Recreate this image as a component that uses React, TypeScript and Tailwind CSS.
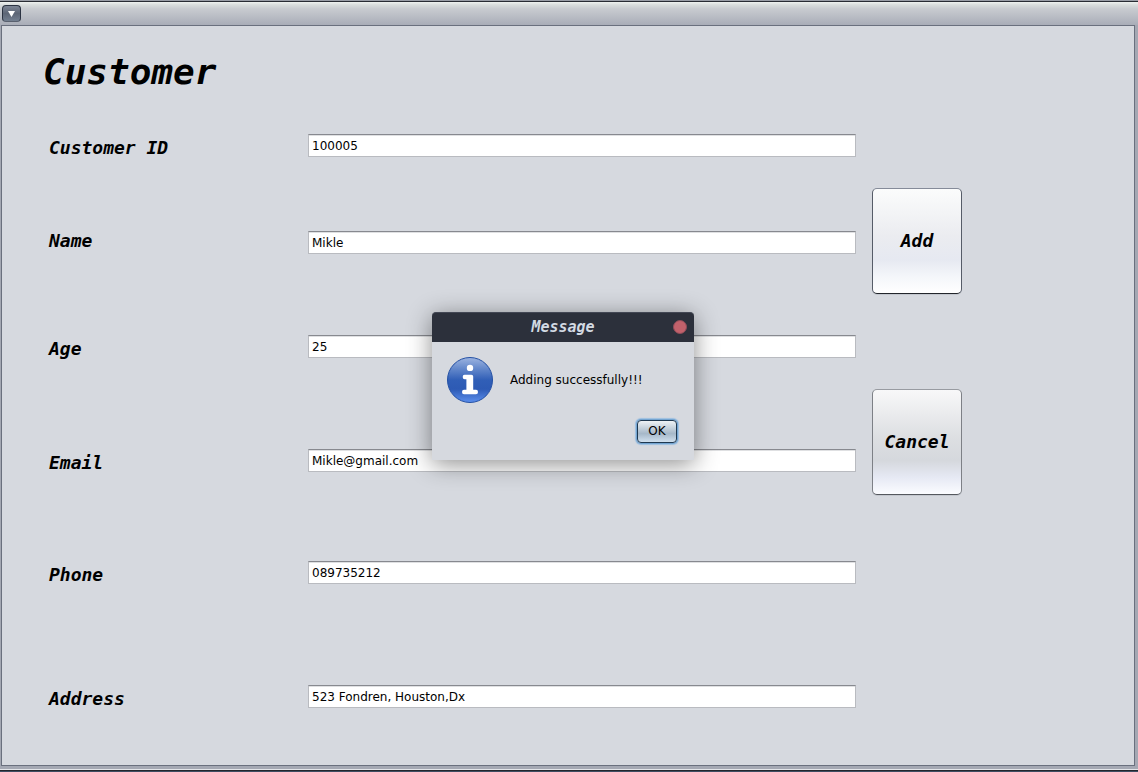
import React from "react";

type Field = { id: string; label: string; value: string; row: string };

const fields: Field[] = [
  { id: "customer-id", label: "Customer ID", value: "100005", row: "h-7 items-start leading-7" },
  { id: "name", label: "Name", value: "Mikle", row: "mt-[66px] h-[26px] items-end leading-[26px]" },
  { id: "age", label: "Age", value: "25", row: "mt-[81px] h-7 items-start leading-7" },
  { id: "email", label: "Email", value: "Mikle@gmail.com", row: "mt-[86px] h-7 items-start leading-7" },
  { id: "phone", label: "Phone", value: "089735212", row: "mt-[84px] h-7 items-start leading-7" },
  { id: "address", label: "Address", value: "523 Fondren, Houston,Dx", row: "mt-[96px] h-7 items-start leading-7" },
];

function TitleBar() {
  return (
    <header className="flex h-[23px] shrink-0 items-start bg-[linear-gradient(to_bottom,#eff2f0_0%,#d9dddd_12%,#c8cbd0_30%,#a9adb8_100%)] px-[2px] pt-[3px]">
      <button
        type="button"
        aria-label="Window menu"
        className="flex h-[17px] w-[19px] items-center justify-center rounded-[4px] border border-[#2b3342] border-b-[#59616f] bg-linear-to-b from-[#7d8595] via-[#5d6676] to-[#737f90]"
      >
        <svg width="7" height="6" viewBox="0 0 7 6" aria-hidden="true">
          <path d="M0 0H7L3.5 6Z" fill="#fff" />
        </svg>
      </button>
    </header>
  );
}

function FieldRow({ field }: { field: Field }) {
  return (
    <div className={`flex ${field.row}`}>
      <label
        htmlFor={field.id}
        className="w-[259px] shrink-0 font-['DejaVu_Sans_Mono',monospace] text-[18px] font-bold italic"
      >
        {field.label}
      </label>
      <input
        id={field.id}
        type="text"
        defaultValue={field.value}
        className="h-[23px] min-w-0 flex-1 border border-[#b9bbc0] border-t-[#87898f] bg-white px-[3px] font-['DejaVu_Sans',sans-serif] text-[12px] leading-5 shadow-[inset_0_1px_0_#dfe0e2] outline-none"
      />
    </div>
  );
}

function InfoIcon() {
  return (
    <svg width="46" height="46" viewBox="0 0 46 46" className="shrink-0" aria-hidden="true">
      <defs>
        <linearGradient id="info-fill" x1="0" y1="0" x2="0" y2="1">
          <stop offset="0" stopColor="#9db4e0" />
          <stop offset="0.25" stopColor="#6388cb" />
          <stop offset="0.5" stopColor="#315fb7" />
          <stop offset="0.7" stopColor="#2d5ab4" />
          <stop offset="1" stopColor="#5c8fee" />
        </linearGradient>
      </defs>
      <circle cx="23" cy="23" r="22.5" fill="url(#info-fill)" stroke="#2450a4" />
      <circle cx="23" cy="10.9" r="3.2" fill="#fff" />
      <path
        d="M17.5 17.7H24.4Q26.2 17.7 26.2 19.5V32.8H29Q31 32.8 31 35Q31 37.2 29 37.2H17Q15 37.2 15 35Q15 32.8 17 32.8H19.4V22.2H17.7Q15.7 22.2 15.7 20Q15.7 17.7 17.5 17.7Z"
        fill="#fff"
      />
    </svg>
  );
}

function MessageDialog() {
  return (
    <div className="absolute inset-0 flex items-center justify-center pr-3 pb-[2px]">
      <section
        role="dialog"
        aria-labelledby="message-title"
        className="w-[262px] rounded-t-[4px] bg-[#d6d9df] shadow-[0_4px_24px_rgba(0,0,0,0.45)]"
      >
        <header className="grid h-[30px] grid-cols-[21px_1fr_21px] items-center rounded-t-[4px] border-t border-[#434754] bg-[#2c303b]">
          <h2
            id="message-title"
            className="col-start-2 text-center font-['DejaVu_Sans_Mono',monospace] text-[15px] leading-5 font-bold text-[#d3dae3] italic"
          >
            Message
          </h2>
          <button
            type="button"
            aria-label="Close"
            className="size-[14px] rounded-full border border-[#8f4c59] bg-[#c2616b]"
          />
        </header>
        <div className="flex items-center gap-[17px] px-[15px] pt-[15px] font-['DejaVu_Sans',sans-serif] text-[12px] leading-5">
          <InfoIcon />
          <p className="whitespace-nowrap">Adding successfully!!!</p>
        </div>
        <div className="flex justify-end px-[17px] pt-[17px] pb-[17px]">
          <button
            type="button"
            className="h-[23px] w-10 rounded-[4px] border border-[#1f3850] bg-linear-to-b from-[#eef2f5] via-[#a6b8c9] via-60% to-[#d0e0ee] font-['DejaVu_Sans',sans-serif] text-[12px] leading-5 shadow-[0_0_0_1px_#73a4d1,0_0_1px_2px_#9dbfe0]"
          >
            OK
          </button>
        </div>
      </section>
    </div>
  );
}

export default function App() {
  return (
    <div className="relative flex min-h-screen flex-col border-t border-[#999da6] bg-[#a4a8b3] text-black">
      <div className="h-px bg-[#292c34]" />
      <TitleBar />
      <main className="ml-px mr-[3px] flex-1 border border-[#6a707e] bg-[#d6d9df] pl-[47px] pr-[172px]">
        <h1 className="-ml-[6px] pt-[22px] font-['DejaVu_Sans_Mono',monospace] text-[36px] leading-[48px] font-bold italic">
          Customer
        </h1>
        <form className="flex items-start gap-4 pt-[38px]">
          <div className="min-w-0 flex-1">
            {fields.map((field) => (
              <FieldRow key={field.id} field={field} />
            ))}
          </div>
          <div className="flex w-[90px] shrink-0 flex-col gap-[95px] pt-[54px] font-['DejaVu_Sans_Mono',monospace] text-[18px] font-bold italic">
            <button
              type="button"
              className="h-[106px] rounded-[5px] border border-[#565c68] border-t-[#858b99] border-b-[#22252b] bg-[linear-gradient(to_bottom,#fbfcfc_0%,#ebecf0_45%,#e6e9f1_68%,#f4f6fa_84%,#ffffff_100%)] pb-[2px] shadow-[0_1px_0_#c3c7ce]"
            >
              Add
            </button>
            <button
              type="button"
              className="h-[106px] rounded-[5px] border border-[#7d8086] border-t-[#989ba1] border-b-[#55585e] bg-[linear-gradient(to_bottom,#f8f8f9_0%,#dddfe2_45%,#d5d8dd_68%,#e6e9f4_84%,#fbfcff_100%)] pb-[2px] shadow-[0_1px_0_#c3c7ce]"
            >
              Cancel
            </button>
          </div>
        </form>
      </main>
      <footer className="shrink-0">
        <div className="h-[3px] bg-[#a4a8b3]" />
        <div className="h-px bg-[#e3e5e9]" />
        <div className="h-px bg-[#23262d]" />
        <div className="h-px bg-[#3f4e63]" />
      </footer>
      <MessageDialog />
    </div>
  );
}
